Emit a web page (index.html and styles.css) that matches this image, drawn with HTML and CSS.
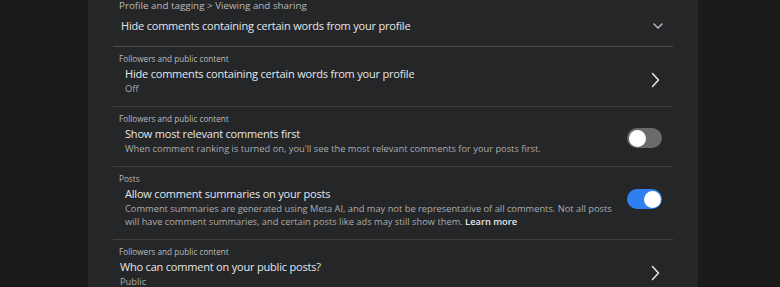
FILE: index.html
```html
<!DOCTYPE html>
<html lang="en">
<head>
<meta charset="utf-8">
<title>Comment settings</title>
<link rel="stylesheet" href="styles.css">
</head>
<body>
<div class="page">
  <div class="panel">
    <div class="head">
      <div class="crumb">Profile and tagging &gt; Viewing and sharing</div>
      <div class="head-row">
        <div class="title">Hide comments containing certain words from your profile</div>
        <svg class="chev-down" width="10" height="6" viewBox="0 0 10 6"><path d="M1 1 L5 5 L9 1" fill="none" stroke="#b0b3b8" stroke-width="1.6" stroke-linecap="round" stroke-linejoin="round"/></svg>
      </div>
    </div>

    <div class="item">
      <div class="label">Followers and public content</div>
      <div class="row">
        <div class="text">
          <div class="title">Hide comments containing certain words from your profile</div>
          <div class="desc">Off</div>
        </div>
        <svg class="chev-right" width="9" height="16" viewBox="0 0 9 16"><path d="M1.5 1.5 L7.5 8 L1.5 14.5" fill="none" stroke="#e4e6eb" stroke-width="1.5" stroke-linecap="round" stroke-linejoin="round"/></svg>
      </div>
    </div>

    <div class="item">
      <div class="label">Followers and public content</div>
      <div class="row top">
        <div class="text">
          <div class="title">Show most relevant comments first</div>
          <div class="desc">When comment ranking is turned on, you'll see the most relevant comments for your posts first.</div>
        </div>
        <div class="toggle off"><span class="knob"></span></div>
      </div>
    </div>

    <div class="item">
      <div class="label">Posts</div>
      <div class="row top">
        <div class="text">
          <div class="title">Allow comment summaries on your posts</div>
          <div class="desc wrap">Comment summaries are generated using Meta AI, and may not be representative of all comments. Not all posts will have comment summaries, and certain posts like ads may still show them. <span class="more">Learn more</span></div>
        </div>
        <div class="toggle on"><span class="knob"></span></div>
      </div>
    </div>

    <div class="item last">
      <div class="label">Followers and public content</div>
      <div class="row">
        <div class="text shift">
          <div class="title">Who can comment on your public posts?</div>
          <div class="desc">Public</div>
        </div>
        <svg class="chev-right" width="9" height="16" viewBox="0 0 9 16"><path d="M1.5 1.5 L7.5 8 L1.5 14.5" fill="none" stroke="#e4e6eb" stroke-width="1.5" stroke-linecap="round" stroke-linejoin="round"/></svg>
      </div>
    </div>
  </div>
</div>
</body>
</html>
```

FILE: styles.css
```css
html, body {
  margin: 0;
  padding: 0;
  background: #1b1b1c;
  height: 100%;
  overflow: hidden;
}
body {
  font-family: "Open Sans", "Noto Sans", sans-serif;
  color: #e4e6eb;
}
.page {
  display: flex;
  height: 287px;
  padding-left: 88px;
}
.panel {
  width: 610px;
  background: #252627;
  padding: 0 25px;
  box-sizing: border-box;
  height: 100%;
}
.head {
  height: 47px;
  box-sizing: border-box;
  border-bottom: 1px solid #4a4b4d;
}
.crumb {
  font-size: 9.8px;
  line-height: 12px;
  color: #b8bbbf;
  padding-left: 6px;
}
.head-row {
  display: flex;
  align-items: center;
  justify-content: space-between;
  height: 27px;
  padding-left: 8px;
  padding-right: 10px;
}
.label {
  font-size: 8.2px;
  line-height: 12px;
  color: #b8bbbf;
  padding-left: 6px;
}
.title {
  font-size: 11px;
  letter-spacing: -0.2px;
  line-height: 17px;
  color: #e4e6eb;
}
.item {
  border-bottom: 1px solid #3f4042;
  padding-top: 6px;
  padding-bottom: 11px;
}
.item.last {
  border-bottom: 0;
}
.row {
  display: flex;
  align-items: center;
  justify-content: space-between;
  padding-left: 12px;
  padding-right: 11px;
}
.row.top {
  align-items: flex-start;
}
.text.shift {
  margin-left: -5px;
}
.desc {
  font-size: 9.3px;
  line-height: 13px;
  color: #a9acb1;
}
.desc.wrap {
  max-width: 492px;
}
.more {
  color: #e4e6eb;
  font-weight: 600;
}
.chev-right {
  margin-right: 2px;
}
.toggle {
  width: 35px;
  height: 20px;
  border-radius: 10px;
  position: relative;
  flex-shrink: 0;
  margin-top: 3px;
}
.toggle.off { background: #6a6b6d; }
.toggle.on { background: #2f7ff0; margin-top: 4px; }
.knob {
  position: absolute;
  top: 1.5px;
  width: 17px;
  height: 17px;
  border-radius: 50%;
  background: #ffffff;
}
.toggle.off .knob { left: 1.5px; }
.toggle.on .knob { right: 1.5px; }
```
